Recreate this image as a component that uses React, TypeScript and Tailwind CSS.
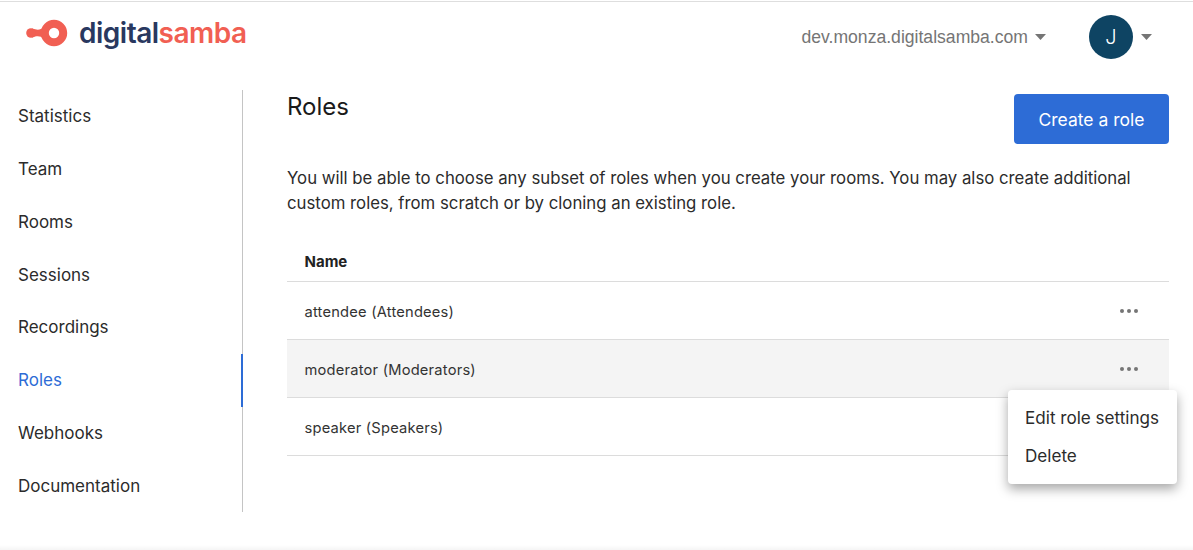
import React from 'react'

const navItems = ['Statistics', 'Team', 'Rooms', 'Sessions', 'Recordings', 'Roles', 'Webhooks', 'Documentation']

const Caret = () => (
  <svg width="11" height="6" viewBox="0 0 11 6" className="block">
    <path d="M0 0h11L5.5 6z" fill="#757575" />
  </svg>
)

const Dots = () => (
  <svg width="18" height="4" viewBox="0 0 18 4" className="block">
    <circle cx="2" cy="2" r="2" fill="#757575" />
    <circle cx="9" cy="2" r="2" fill="#757575" />
    <circle cx="16" cy="2" r="2" fill="#757575" />
  </svg>
)

const Logo = () => (
  <div className="flex items-center">
    <svg width="42" height="28" viewBox="0 0 42 28" className="block">
      <circle cx="28" cy="14" r="9.2" fill="none" stroke="#f15f53" strokeWidth="8" />
      <path d="M6 9.5 C11 11 14 11.5 18 8 L18 20 C14 16.5 11 17 6 18.5 Z" fill="#f15f53" />
      <circle cx="5" cy="14" r="4.8" fill="#f15f53" />
    </svg>
    <span className="ml-[11px] font-['Inter',sans-serif] text-[28px] font-semibold leading-none tracking-[-0.5px] text-[#29385f]">
      digital<span className="text-[#f15f53]">samba</span>
    </span>
  </div>
)

const RoleRow = ({ label, active }: { label: string; active?: boolean }) => (
  <div className={`flex h-[58px] items-center justify-between border-b border-[#dcdcdc] pl-[17.5px] pr-[31px] ${active ? 'bg-[#f4f4f4]' : ''}`}>
    <span className="pt-[3px] text-[14.7px] tracking-[0.2px] text-[#333]">{label}</span>
    {label.startsWith('speaker') ? null : <Dots />}
  </div>
)

export default function App() {
  return (
    <div className="relative h-[550px] w-[1193px] overflow-hidden bg-white font-['Inter',sans-serif]">
      <div className="mt-[1px] h-[1px] bg-[#dedede]" />

      <header className="flex h-[68px] items-start justify-between pl-[26px] pr-[41px] pt-[13px]">
        <div className="pt-[4px]"><Logo /></div>
        <div className="flex items-center">
          <span className="font-['Liberation_Sans',sans-serif] text-[17.6px] text-[#757575]">dev.monza.digitalsamba.com</span>
          <span className="ml-[7px]"><Caret /></span>
          <div className="ml-[43px] flex h-11 w-11 items-center justify-center rounded-full bg-[#0e4463] text-[20px] font-light text-white">J</div>
          <span className="ml-[8px]"><Caret /></span>
        </div>
      </header>

      <div className="flex pt-[20px]">
        <nav className="flex h-[422px] w-[243px] shrink-0 flex-col border-r border-[#c4c4c4]">
          {navItems.map((item) => (
            <div
              key={item}
              className={`flex h-[52.85px] items-center pl-[18px] pt-[1.5px] text-[17px] ${
                item === 'Roles' ? 'mr-[-1px] border-r-2 border-[#2d6cd6] text-[#2d6cd6]' : 'text-[#2b2b2b]'
              }`}
            >
              {item}
            </div>
          ))}
        </nav>

        <main className="ml-[44px] w-[882px] pt-[4px]">
          <div className="flex items-start justify-between">
            <h1 className="text-[24px] leading-[26px] text-[#1a1a1a]">Roles</h1>
            <button className="h-[50px] w-[155px] rounded bg-[#2d6cd6] pt-[2px] text-[17.5px] text-white">Create a role</button>
          </div>
          <p className="mt-[21.5px] text-[16.75px] leading-[25px] text-[#2b2b2b]">
            You will be able to choose any subset of roles when you create your rooms. You may also create additional
            custom roles, from scratch or by cloning an existing role.
          </p>
          <div className="mt-[26.5px] flex h-[40px] items-center border-b border-[#dcdcdc] pl-[17.5px] pt-[2px] text-[15px] font-bold text-[#222]">
            Name
          </div>
          <RoleRow label="attendee (Attendees)" />
          <RoleRow label="moderator (Moderators)" active />
          <RoleRow label="speaker (Speakers)" />
        </main>
      </div>

      {/* Context menu open on the moderator row */}
      <div className="absolute left-[1008px] top-[390px] flex h-[94px] w-[169px] flex-col justify-center rounded bg-white pl-[17px] text-[17.1px] text-[#2b2b2b] shadow-[0_5px_12px_rgba(0,0,0,0.35)]">
        <div className="flex h-[38px] items-center">Edit role settings</div>
        <div className="flex h-[38px] items-center">Delete</div>
      </div>

      <div className="absolute bottom-0 left-0 h-[5px] w-full bg-gradient-to-b from-white to-[#f5f5f5]" />
    </div>
  )
}
